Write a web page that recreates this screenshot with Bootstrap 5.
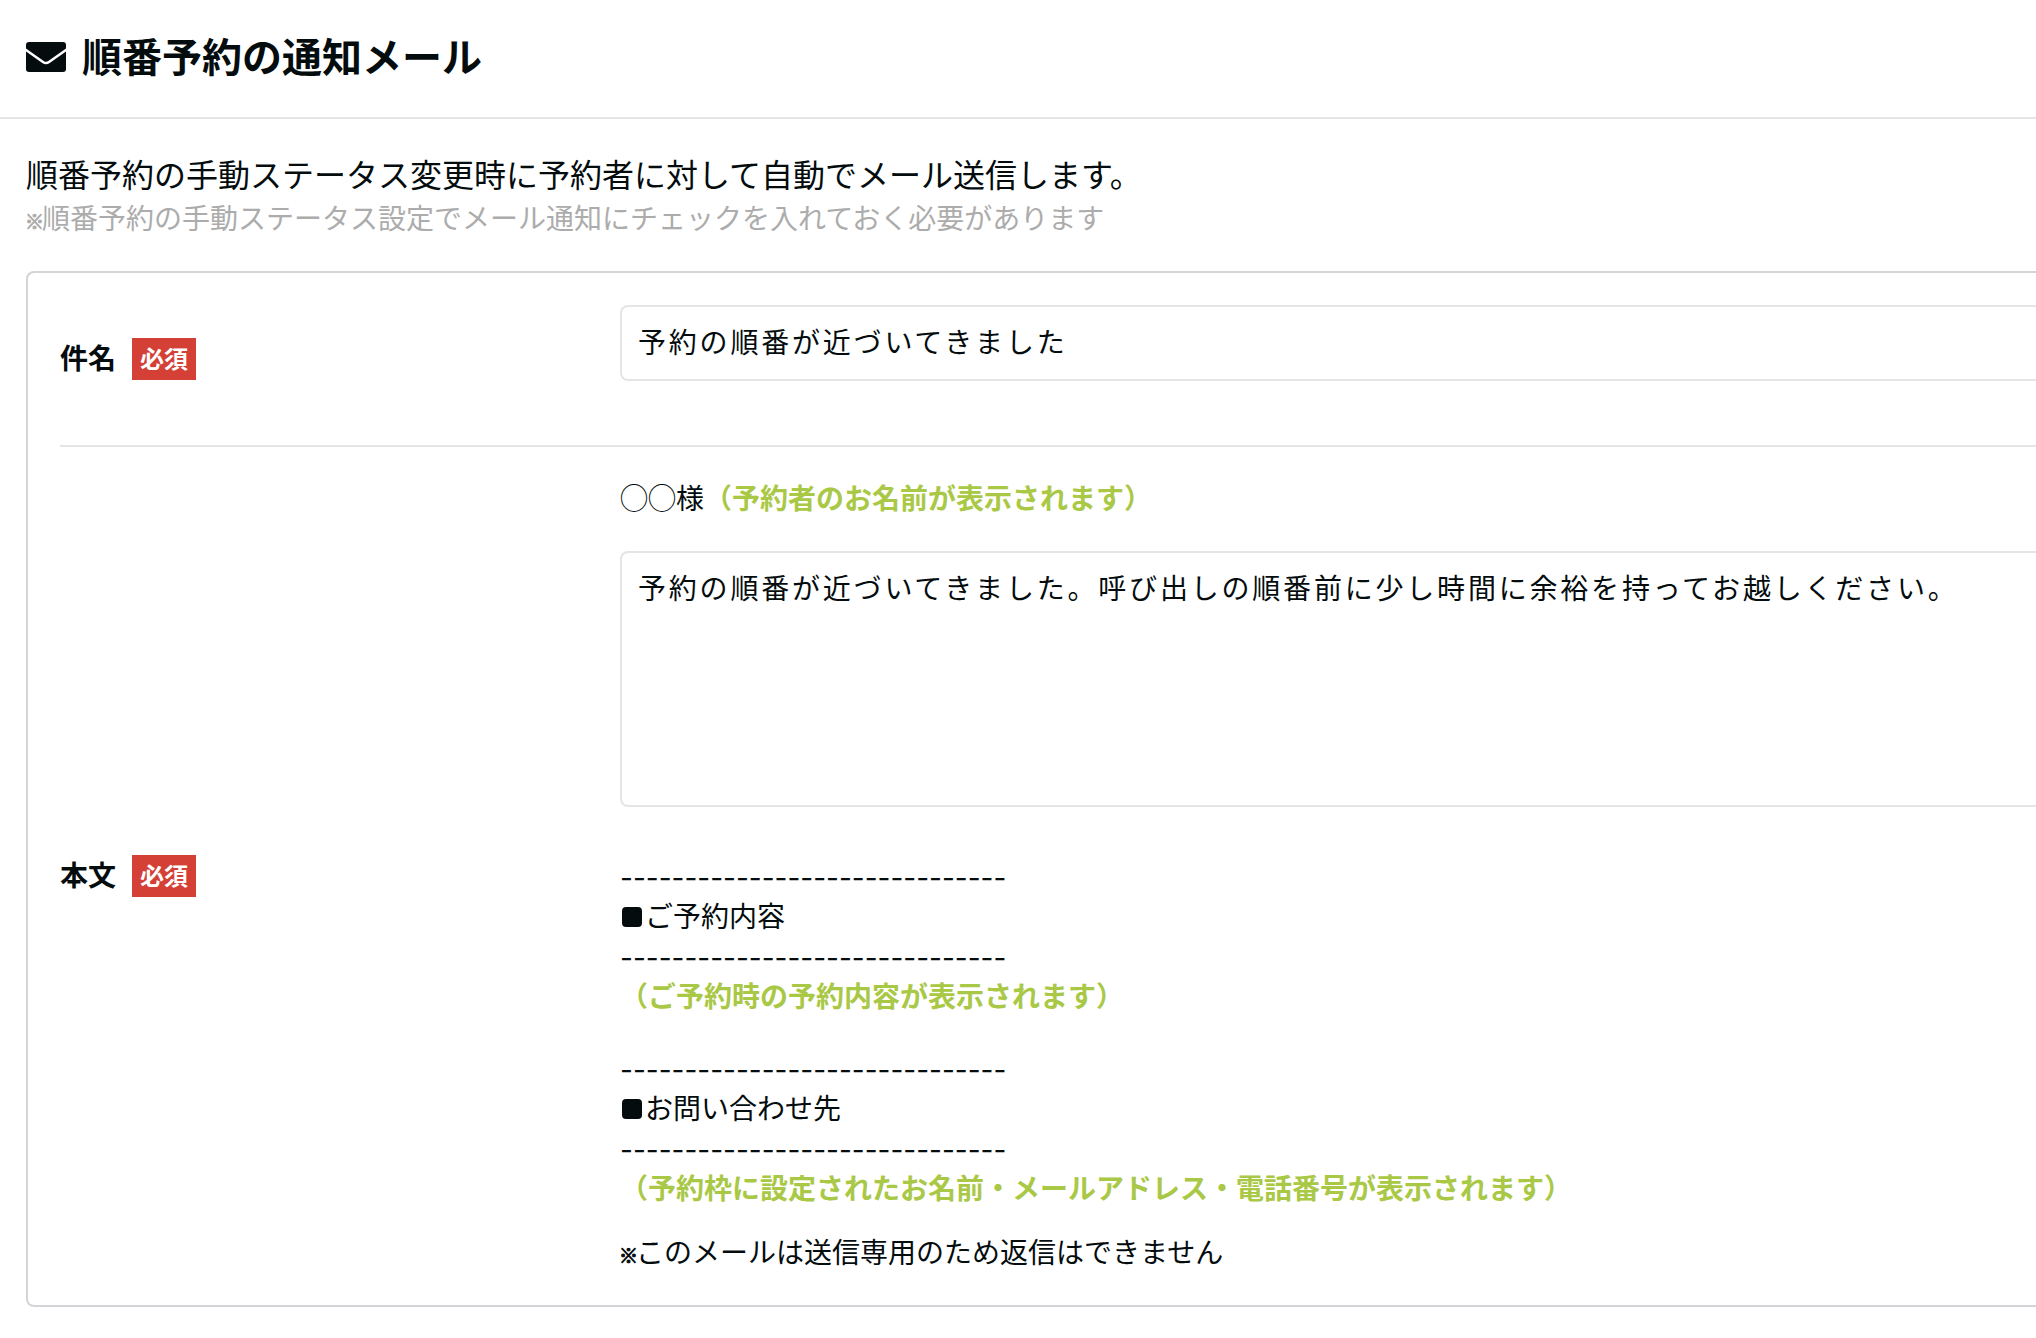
<!DOCTYPE html>
<html lang="ja">
<head>
<meta charset="utf-8">
<meta name="viewport" content="width=device-width, initial-scale=1">
<title>順番予約の通知メール</title>
<link href="https://cdn.jsdelivr.net/npm/bootstrap@5.3.0/dist/css/bootstrap.min.css" rel="stylesheet">
<style>
  body {
    color: #040c0e;
    background: #fff;
    font-family: "Noto Sans CJK JP", sans-serif;
    font-size: 28px;
    line-height: 40px;
  }
  .page-head { padding: 32px 26px 36px; border-bottom: 2px solid #e5e5e5; }
  .page-title { font-size: 40px; line-height: 46px; gap: 16px; }
  .page-title span { padding-bottom: 3px; }
  .page-body { padding: 30px 0 31px 26px; }
  .intro { font-size: 32px; line-height: 48px; }
  .note { color: #acacac; margin-bottom: 34px; }
  .kome { font-size: 19px; line-height: 1; font-weight: 900; margin: 0 -2px 0 -1px; -webkit-text-stroke: 1px currentColor; }
  .panel { border: 2px solid #d2d4d8; border-right: 0; border-radius: 8px 0 0 8px; padding-left: 32px; }
  .field + .field { border-top: 2px solid #e5e5e5; }
  .field-body { padding: 32px 0; }
  .mail-body { padding: 30px 0 34px; }
  .field-name { gap: 16px; }
  .required { background: #d44036; font-size: 24px; line-height: 40px; padding: 0 8px 2px; }
  .mail-input {
    color: inherit;
    font-size: 28px;
    line-height: 40px;
    letter-spacing: .1em;
    padding: 14px 16px 18px;
    border: 2px solid #e5e5e5;
    border-right: 0;
    border-radius: 8px 0 0 8px;
    resize: none;
  }
  input.mail-input { height: 76px; margin-bottom: 32px; }
  textarea.mail-input { height: 256px; margin: 34px 0 48px; }
  .auto-text { color: #a9c846; font-weight: 700; }
  .rule-text { font-family: Inter, sans-serif; height: 40px; line-height: 46px; }
  .square { width: 20px; height: 20px; border-radius: 4px; background: currentColor; font-size: 12px; line-height: 18px; margin: 3px 3px 0 2px; text-align: center; }
  @media (min-width: 1200px) {
    .field-label { flex: 0 0 560px; }
  }
</style>
</head>
<body>
<header class="page-head">
  <h1 class="page-title d-flex align-items-center fw-bold mb-0">
    <svg width="40" height="30" viewBox="0 0 40 30" aria-hidden="true">
      <rect width="40" height="30" rx="3" fill="currentColor"/>
      <path fill="none" stroke="#fff" stroke-width="2.500" d="M-1 7.200 17 19.900q3 2.200 6 0L41 7.200"/>
    </svg>
    <span>順番予約の通知メール</span>
  </h1>
</header>

<main class="page-body">
  <p class="intro mb-0">順番予約の手動ステータス変更時に予約者に対して自動でメール送信します。</p>
  <p class="note"><span class="kome">※</span>順番予約の手動ステータス設定でメール通知にチェックを入れておく必要があります</p>

  <form class="panel">
    <div class="field d-flex flex-column flex-xl-row">
      <label for="subject" class="field-label field-name d-flex align-items-center fw-bold"><span class="pb-1">件名</span><span class="required text-white">必須</span></label>
      <div class="field-body flex-grow-1">
        <input id="subject" type="text" class="mail-input form-control" value="予約の順番が近づいてきました">
      </div>
    </div>
    <div class="field d-flex flex-column flex-xl-row">
      <label for="message" class="field-label field-name d-flex align-items-center fw-bold"><span class="pb-1">本文</span><span class="required text-white">必須</span></label>
      <div class="mail-body flex-grow-1">
        <p class="mb-0">◯◯様<span class="auto-text">（予約者のお名前が表示されます）</span></p>
        <textarea id="message" class="mail-input form-control">予約の順番が近づいてきました。呼び出しの順番前に少し時間に余裕を持ってお越しください。</textarea>
        <div class="mb-4 pb-2">
          <div class="rule-text">------------------------------</div>
          <div class="d-flex align-items-center"><span class="square">■</span>ご予約内容</div>
          <div class="rule-text">------------------------------</div>
          <div class="auto-text">（ご予約時の予約内容が表示されます）</div>
        </div>
        <div class="mb-4">
          <div class="rule-text">------------------------------</div>
          <div class="d-flex align-items-center"><span class="square">■</span>お問い合わせ先</div>
          <div class="rule-text">------------------------------</div>
          <div class="auto-text">（予約枠に設定されたお名前・メールアドレス・電話番号が表示されます）</div>
        </div>
        <p class="mb-0"><span class="kome">※</span>このメールは送信専用のため返信はできません</p>
      </div>
    </div>
  </form>
</main>
<script src="https://cdn.jsdelivr.net/npm/bootstrap@5.3.0/dist/js/bootstrap.bundle.min.js"></script>
</body>
</html>
